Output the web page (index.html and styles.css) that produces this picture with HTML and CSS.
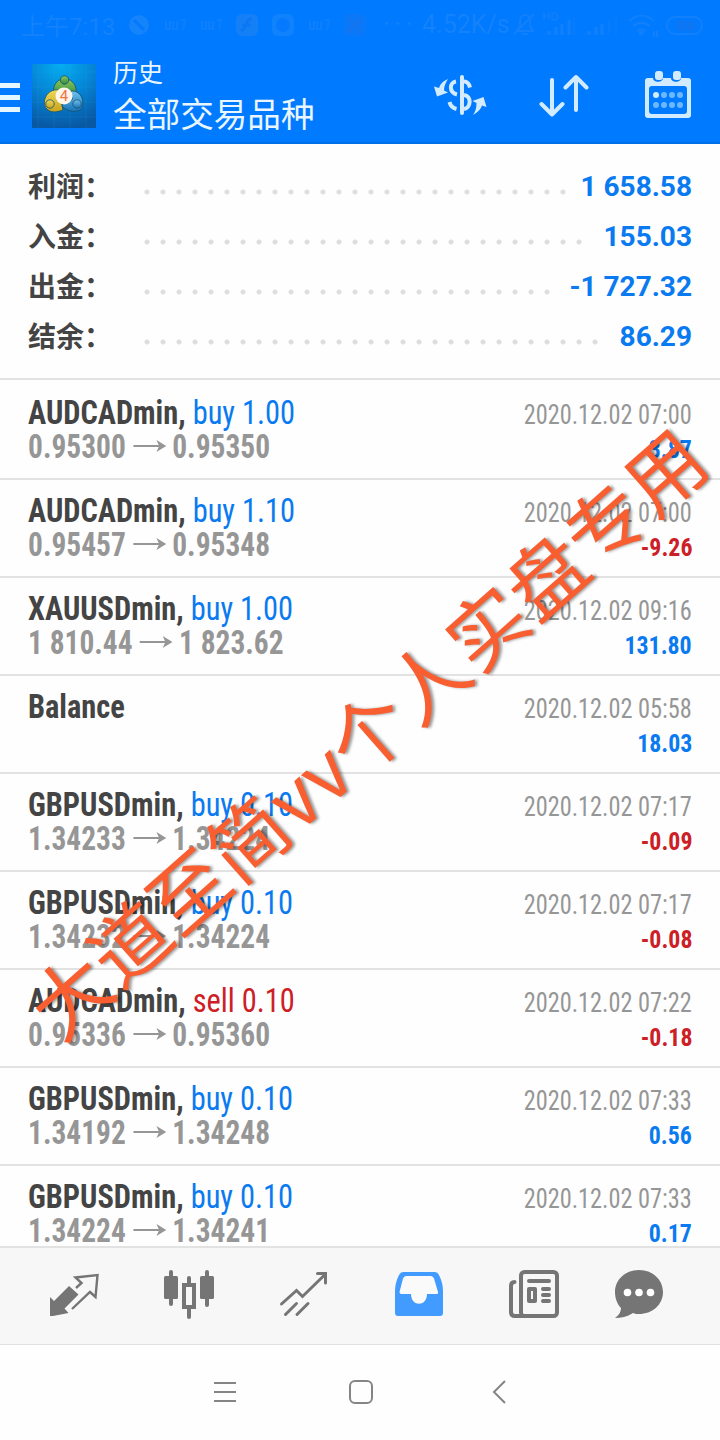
FILE: index.html
```
<!DOCTYPE html>
<html lang="zh-CN">
<head>
    <meta charset="UTF-8">
    <title>历史</title>
    <link rel="stylesheet" href="styles.css">
</head>
<body>

    <header class="header">
        <!-- Barre de statut -->
        <div class="status">
            <span class="status-time">上午7:13</span>
            <svg class="status-icons" width="240" height="30" viewBox="128 8 240 30">
                <circle cx="139" cy="24" r="10" fill="#1583fa"/>
                <path d="M134 19l10 10" stroke="#0479ff" stroke-width="3"/>
                <g fill="none" stroke="#0d7ffc" stroke-width="2">
                    <path d="M166 20v8h4v-8M173 20v8h4v-8M181 19h4l-2 10"/>
                    <path d="M202 20v8h4v-8M209 20v8h4v-8M217 19h4l-2 10"/>
                    <path d="M310 20v8h4v-8M317 20v8h4v-8M325 19h4l-2 10"/>
                </g>
                <rect x="236" y="13" width="22" height="22" rx="6" fill="#1580f6"/>
                <path d="M252 18c-8 0-3 8-11 12M242 24h9" stroke="#0b77f4" stroke-width="3" fill="none"/>
                <rect x="272" y="13" width="22" height="22" rx="6" fill="#1082fb"/>
                <circle cx="283" cy="24" r="7" fill="#057aff"/>
                <rect x="344" y="13" width="22" height="22" rx="6" fill="#0b78f7"/>
                <path d="M348 31l14-14M350 17l10 14" stroke="#1874ec" stroke-width="2"/>
            </svg>
            <span class="status-dots">···</span>
            <span class="status-speed">4.52K/s</span>
            <svg class="status-right" width="200" height="30" viewBox="512 8 200 30" fill="none" stroke="#1280fa" stroke-width="2">
                <path d="M517 30h16l-3-5v-5c0-8-10-8-10 0v5l-3 5M522 33h6M514 33l20-20"/>
                <path d="M544 11v8M549 11v8M544 15h5M552 12v7h2c5 0 5-7 0-7z" stroke-width="1.5"/>
                <path d="M549 34v-4M556 34v-8M562 34v-11M569 34v-15M589 34v-4M596 34v-8M602 34v-11" stroke-width="3"/>
                <path d="M574 34v-18M609 34v-15M616 34v-18" stroke="#077cfd"/>
                <path d="M629 20c8-7 17-7 25 0M633 25c5-4 12-4 17 0M637 30c3-2 6-2 9 0M654 30v6M657 30v6"/>
                <circle cx="641" cy="32" r="1.5"/>
                <rect x="667" y="16" width="35" height="17" rx="8"/>
                <rect x="676" y="19" width="20" height="11" rx="3" fill="#0b77f5" stroke="none"/>
            </svg>
        </div>

        <!-- Titre et actions -->
        <div class="toolbar">
            <div class="burger"><i></i><i></i><i></i></div>
            <svg class="logo" width="64" height="64" viewBox="0 0 64 64">
                <defs>
                    <radialGradient id="bg" cx=".45" cy="0" r="1">
                        <stop offset="0" stop-color="#04aef0"/>
                        <stop offset=".5" stop-color="#0585d6"/>
                        <stop offset="1" stop-color="#0858a4"/>
                    </radialGradient>
                    <linearGradient id="green" x1="0" y1="0" x2="0" y2="1">
                        <stop offset="0" stop-color="#8fc85c"/>
                        <stop offset="1" stop-color="#2f8a41"/>
                    </linearGradient>
                    <linearGradient id="gold" x1="0" y1="0" x2="0" y2="1">
                        <stop offset="0" stop-color="#ecd95a"/>
                        <stop offset="1" stop-color="#c9a41c"/>
                    </linearGradient>
                    <linearGradient id="sky" x1="0" y1="0" x2="0" y2="1">
                        <stop offset="0" stop-color="#6fc2ee"/>
                        <stop offset="1" stop-color="#1873b8"/>
                    </linearGradient>
                </defs>
                <rect width="64" height="64" fill="url(#bg)"/>
                <path d="M6 0v64M22 0v64M38 0v64M54 0v64M0 8h64M0 23h64M0 38h64M0 53h64" stroke="#4cc4f0" stroke-opacity=".1"/>
                <g stroke="#17506b" stroke-width=".8">
                    <path d="M22 32c-5-23 26-23 22 0l-8-1c0-6-6-6-7 0z" fill="url(#green)"/>
                    <path d="M27 26c-13-2-19 14-11 20 4 3 10 2 15 0l-2-9c-5 0-5-4 0-5z" fill="url(#gold)"/>
                    <path d="M39 27c11-1 15 13 9 19-6 3-14 1-18-4l5-7c6 3 7-1 3-3z" fill="url(#sky)"/>
                    <circle cx="32.500" cy="16" r="4.200" fill="url(#green)"/>
                    <circle cx="18" cy="40" r="4.200" fill="url(#gold)"/>
                    <circle cx="45" cy="40" r="4.200" fill="url(#sky)"/>
                </g>
                <circle cx="32" cy="32" r="8.500" fill="#fff6ec"/>
                <text class="logo-number" x="32" y="37" text-anchor="middle">4</text>
            </svg>
            <div class="titles">
                <div class="title-small">历史</div>
                <div class="title-big">全部交易品种</div>
            </div>
            <svg class="action action-currency" width="54" height="44" viewBox="433 73 54 44" fill="none" stroke="#d3ebff">
                <path d="M462 77v36" stroke-width="4" stroke-linecap="round"/>
                <path d="M456 81.500c-7 1-7 11 1 13M449.500 102c1 4 3 6 7 7" stroke-width="4"/>
                <path d="M464 81.500c3 0 5 2 6 6M464 95c8 1 7 13 0 14" stroke-width="4"/>
                <path d="M448 79c-5 2-8 5-9 9l-5-1.500 3 10 11-4-4-2c0-5 2-8 4-11.500zM473 115c5-3 8-6 9-9.500l4.500 1.500-3-10-11 4 4 2c0 5-1 8-3.500 12z" fill="#d3ebff" stroke="none"/>
            </svg>
            <svg class="action action-sort" width="50" height="44" viewBox="539 73 50 44" fill="none" stroke="#d3ebff" stroke-width="4" stroke-linecap="round" stroke-linejoin="round">
                <path d="M552 80v34M541.500 104l10.500 10.500 10.500-10.500M576 110V77M565.500 87.500L576 77l10.500 10.500"/>
            </svg>
            <svg class="action" width="48" height="50" viewBox="644 70 48 50">
                <path d="M648 78h5c0 5 10 5 10 0h8c0 5 10 5 10 0h7q3 0 3 3v34q0 3-3 3h-40q-3 0-3-3V81q0-3 3-3zM652 86q-3 0-3 3v22q0 3 3 3h32q3 0 3-3V89q0-3-3-3z" fill="#d3ebff" fill-rule="evenodd"/>
                <rect x="655" y="71" width="8" height="9" rx="3" fill="#d3ebff"/>
                <rect x="673" y="71" width="8" height="9" rx="3" fill="#d3ebff"/>
                <g fill="#6cb8ff">
                    <circle cx="656" cy="95" r="3" fill="#d3ebff"/>
                    <circle cx="664" cy="95" r="3"/>
                    <circle cx="672" cy="95" r="3"/>
                    <circle cx="680" cy="95" r="3"/>
                    <circle cx="656" cy="105" r="3"/>
                    <circle cx="664" cy="105" r="3"/>
                    <circle cx="672" cy="105" r="3"/>
                    <circle cx="680" cy="105" r="3"/>
                </g>
            </svg>
        </div>
    </header>

    <!-- Résumé du compte -->
    <section class="summary">
        <div class="summary-row"><span class="label">利润：</span><span class="dots"></span><span class="value">1 658.58</span></div>
        <div class="summary-row"><span class="label">入金：</span><span class="dots"></span><span class="value">155.03</span></div>
        <div class="summary-row"><span class="label">出金：</span><span class="dots"></span><span class="value">-1 727.32</span></div>
        <div class="summary-row"><span class="label">结余：</span><span class="dots"></span><span class="value">86.29</span></div>
    </section>

    <!-- Liste des transactions, remplie par le script -->
    <main class="deals" id="deals"></main>

    <nav class="tabs">
        <svg width="120" height="96" viewBox="14 1248 120 96">
            <path d="M50 1297l4 4 15-15 9.500 8.500-14 14 4 4.500-15.500 3h-3z" fill="#757575"/>
            <path d="M76 1288l5.500-5-6-5.500 22-2.500-2 22-5.500-5-18 17" fill="none" stroke="#757575" stroke-width="2.400"/>
        </svg>
        <svg width="110" height="96" viewBox="134 1248 110 96" fill="none" stroke="#757575" stroke-width="4" stroke-linecap="round">
            <path d="M171 1272v32M207 1272v33M189 1278v5M189 1308v9"/>
            <rect x="164" y="1276" width="14" height="23" rx="1.500" fill="#757575" stroke="none"/>
            <rect x="200" y="1276" width="14" height="23" rx="1.500" fill="#757575" stroke="none"/>
            <rect x="184" y="1285" width="10" height="22"/>
        </svg>
        <svg width="120" height="96" viewBox="244 1248 120 96" fill="none" stroke="#757575" stroke-width="3" stroke-linecap="round">
            <path d="M281.500 1304l15-13.500 6 6 22-21.500M285.500 1314.500l11-11M297 1314.500l11-11"/>
            <path d="M317.500 1273.500h8v9.500" stroke-width="3"/>
        </svg>
        <svg width="110" height="96" viewBox="364 1248 110 96">
            <path d="M403 1272h32q2.500 0 4 3 4 8 4 16v22q0 3-3 3h-42q-3 0-3-3v-22q0-8 4-16 1.500-3 4-3z" fill="#429cff"/>
            <path d="M406 1276q-2 0-3 2.500l-3.500 13.500q0 2 2 2h9.500c0 13 16 13 16 0h9q2.500 0 2-2l-4-13.500q-1-2.500-3-2.500z" fill="#fafafa"/>
        </svg>
        <svg width="120" height="96" viewBox="474 1248 120 96" fill="none" stroke="#757575" stroke-width="4" stroke-linecap="round">
            <rect x="521" y="1272" width="36" height="44" rx="3.500"/>
            <path d="M514.500 1282q-3.500 0-3.500 4v26q0 4 4 4h8"/>
            <path d="M529 1281h20M543 1289h6M543 1295h6M543 1301h6"/>
            <rect x="529" y="1289" width="6" height="12" stroke-linejoin="round"/>
        </svg>
        <svg width="126" height="96" viewBox="594 1248 126 96">
            <path d="M639 1270c13 0 24 9 24 22s-11 22-24 22c-2 0-4 0-6-1-6 4-12 5-18 5 4-3 6-6 6-10-4-4-6-10-6-16 0-13 11-22 24-22z" fill="#757575"/>
            <circle cx="627.500" cy="1292.500" r="3.800" fill="#fff"/>
            <circle cx="639" cy="1292.500" r="3.800" fill="#fff"/>
            <circle cx="650.500" cy="1292.500" r="3.800" fill="#fff"/>
        </svg>
    </nav>

    <!-- Boutons du téléphone -->
    <footer class="system">
        <svg width="22" height="24" viewBox="0 0 22 24"><path d="M0 3h22M0 12h22M0 21h22" stroke="#858585" stroke-width="2"/></svg>
        <svg width="24" height="24" viewBox="0 0 24 24"><rect x="1" y="1" width="22" height="22" rx="5" fill="none" stroke="#858585" stroke-width="2"/></svg>
        <svg width="14" height="24" viewBox="0 0 14 24"><path d="M13 1L2 12l11 11" fill="none" stroke="#858585" stroke-width="2"/></svg>
    </footer>

    <div class="watermark">大道至简<span class="tight">vv</span>个人实盘专用</div>

    <script>
        const deals = [
            { symbol: "AUDCADmin", type: "buy", volume: "1.00", open: "0.95300", close: "0.95350", time: "2020.12.02 07:00", profit: "3.87" },
            { symbol: "AUDCADmin", type: "buy", volume: "1.10", open: "0.95457", close: "0.95348", time: "2020.12.02 07:00", profit: "-9.26" },
            { symbol: "XAUUSDmin", type: "buy", volume: "1.00", open: "1 810.44", close: "1 823.62", time: "2020.12.02 09:16", profit: "131.80" },
            { symbol: "Balance", time: "2020.12.02 05:58", profit: "18.03" },
            { symbol: "GBPUSDmin", type: "buy", volume: "0.10", open: "1.34233", close: "1.34224", time: "2020.12.02 07:17", profit: "-0.09" },
            { symbol: "GBPUSDmin", type: "buy", volume: "0.10", open: "1.34232", close: "1.34224", time: "2020.12.02 07:17", profit: "-0.08" },
            { symbol: "AUDCADmin", type: "sell", volume: "0.10", open: "0.95336", close: "0.95360", time: "2020.12.02 07:22", profit: "-0.18" },
            { symbol: "GBPUSDmin", type: "buy", volume: "0.10", open: "1.34192", close: "1.34248", time: "2020.12.02 07:33", profit: "0.56" },
            { symbol: "GBPUSDmin", type: "buy", volume: "0.10", open: "1.34224", close: "1.34241", time: "2020.12.02 07:33", profit: "0.17" }
        ];

        const arrow = '<svg class="arrow" width="37" height="14" viewBox="0 0 37 14"><path d="M0 7h33" stroke="#969696" stroke-width="2"/><path d="M26 1l11 6-11 6 3-6z" fill="#969696"/></svg>';

        // Afficher les transactions
        deals.forEach(d => {
            const order = d.type ? `, <span class="${d.type}">${d.type} ${d.volume}</span>` : "";
            const prices = d.open ? `${d.open}${arrow}${d.close}` : "&nbsp;";
            const sign = d.profit.startsWith("-") ? "loss" : "gain";

            document.getElementById("deals").innerHTML += `
                <div class="deal">
                    <div class="line"><span class="symbol">${d.symbol}${order}</span><span class="time">${d.time}</span></div>
                    <div class="line"><span class="prices">${prices}</span><span class="profit ${sign}">${d.profit}</span></div>
                </div>`;
        });
    </script>

</body>
</html>
```
FILE: styles.css
```
* {
    box-sizing: border-box;
}

body {
    margin: 0;
    width: 720px;
    height: 1440px;
    display: flex;
    flex-direction: column;
    overflow: hidden;
    position: relative;
    background: #fefefe;
    font-family: Roboto, "Noto Sans CJK SC", sans-serif;
}

svg {
    display: block;
    flex: none;
}

/* En-tête */
.header {
    height: 144px;
    background: #007aff;
    border-bottom: 2px solid #0070e8;
}

.status {
    height: 48px;
    display: flex;
    align-items: center;
    padding-left: 21px;
    color: #1482fa;
    font-size: 25px;
    white-space: nowrap;
}

.status-time {
    width: 107px;
    font-size: 24px;
}

.status-dots {
    width: 54px;
    padding-left: 15px;
    letter-spacing: 5px;
}

.status-speed {
    width: 90px;
}

.toolbar {
    height: 94px;
    display: flex;
    align-items: center;
}

.burger {
    width: 20px;
    height: 29px;
    margin: 4px 12px 0 0;
    display: flex;
    flex-direction: column;
    justify-content: space-between;
}

.burger i {
    height: 5px;
    background: #e4f6ff;
}

.logo {
    margin-top: 2px;
}

.logo-number {
    font-size: 15px;
    fill: #f0743c;
}

.titles {
    width: 320px;
    padding-top: 3px;
    margin-left: 17px;
    color: #e9f6ff;
    white-space: nowrap;
}

.title-small {
    font-size: 25px;
    line-height: 38px;
}

.title-big {
    font-size: 33.6px;
    line-height: 45px;
}

.action-sort {
    margin: 0 55px 0 52px;
}

/* Résumé */
.summary {
    height: 236px;
    padding: 18px 28px 0;
    border-bottom: 2px solid #e2e2e2;
}

.summary-row {
    height: 50px;
    display: flex;
    align-items: center;
    font-size: 28px;
    line-height: 50px;
}

.label {
    width: 111px;
    padding-top: 1px;
    font-weight: 600;
    color: #444;
}

.dots {
    flex: 1;
    height: 6px;
    margin: 9px 13px 0 0;
    background: radial-gradient(circle, #dedede 2px, transparent 3px) 0 0 / 16px 6px repeat-x;
}

.value {
    font-weight: bold;
    color: #0a7af0;
}

/* Transactions */
.deals {
    height: 866px;
    padding-top: 2px;
    overflow: hidden;
    font-family: "Roboto Condensed", Roboto, sans-serif;
    font-stretch: 75%;
}

.deal {
    height: 98px;
    padding: 14px 28px 0;
    border-bottom: 2px solid #e2e2e2;
}

.line {
    height: 34px;
    display: flex;
    justify-content: space-between;
    align-items: baseline;
    font-size: 33px;
    line-height: 34px;
    white-space: nowrap;
}

.symbol {
    font-weight: bold;
    color: #444;
    transform: scaleX(0.921);
    transform-origin: left;
}

.buy, .sell {
    font-weight: normal;
}

.buy, .gain {
    color: #0a7af0;
}

.sell, .loss {
    color: #cc2026;
}

.prices {
    font-weight: bold;
    color: #969696;
    transform: scaleX(0.892);
    transform-origin: left;
}

.arrow {
    display: inline-block;
    margin: 0 7px 5px 8px;
}

.time {
    font-size: 27px;
    color: #969696;
    transform: scaleX(0.9);
    transform-origin: right;
}

.profit {
    font-size: 26.5px;
    font-weight: bold;
    transform: scaleX(0.9);
    transform-origin: right;
}

/* Onglets du bas */
.tabs {
    height: 99px;
    display: flex;
    padding-left: 14px;
    background: #f7f7f7;
    border-top: 2px solid #e2e2e2;
    border-bottom: 1px solid #e2e2e2;
}

.system {
    height: 95px;
    display: flex;
    align-items: center;
    padding: 0 0 2px 214px;
}

.system svg + svg {
    margin-left: 113px;
}

.system svg:last-child {
    margin-left: 119px;
}

/* Filigrane par-dessus la page */
.watermark {
    position: absolute;
    left: 365px;
    top: 730px;
    font-size: 78px;
    line-height: 1;
    letter-spacing: 1px;
    font-family: "Noto Sans CJK SC", sans-serif;
    color: #f85e30;
    white-space: nowrap;
    text-shadow: 2px 2px 3px rgba(0, 0, 0, 0.4);
    transform: translate(-50%, -50%) rotate(-41.4deg);
}

.tight {
    letter-spacing: 0;
}
```
